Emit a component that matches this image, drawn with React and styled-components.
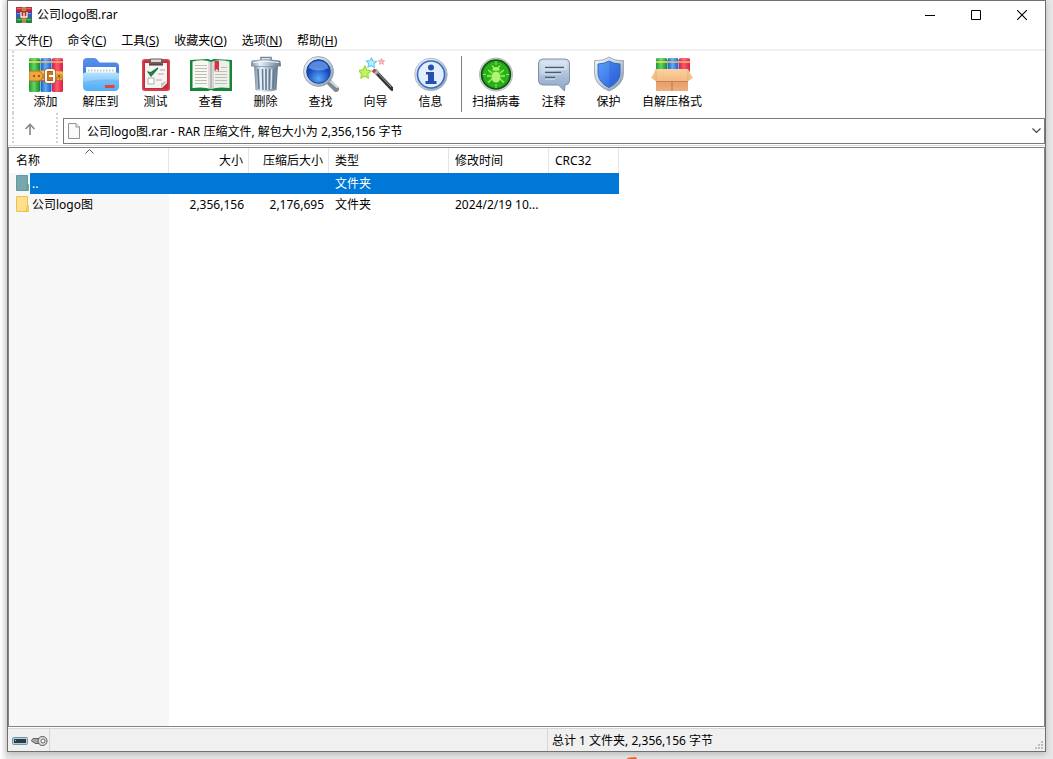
import React from 'react';
import styled, { createGlobalStyle } from 'styled-components';

const GlobalStyle = createGlobalStyle`
  * {
    box-sizing: border-box;
  }

  body {
    margin: 0;
    background: #e9e9e9;
    color: #000;
    font-family: 'Noto Sans', 'Noto Sans CJK SC', sans-serif;
    font-size: 12px;
    line-height: 18px;
  }

  button,
  select {
    margin: 0;
    padding: 0;
    border: none;
    background: none;
    color: inherit;
    font: inherit;
  }

  svg {
    display: block;
    flex: none;
  }
`;

const Desktop = styled.div`
  display: flex;
  flex-direction: column;
  height: 100vh;
  padding: 0 7px;
  overflow: hidden;
  background: linear-gradient(to right, #fff 0, #e6e6e6 7px, #e6e6e6 100%);
`;

const Window = styled.main`
  display: flex;
  flex: 1;
  flex-direction: column;
  min-height: 0;
  border: 1px solid #707070;
  background: #fff;
  box-shadow: 0 2px 6px rgba(0, 0, 0, 0.2);
`;

const DesktopEdge = styled.div`
  display: flex;
  justify-content: center;
  align-items: flex-end;
  height: 7px;
  padding-left: 210px;
`;

const TitleBar = styled.header`
  display: flex;
  align-items: center;
  height: 28px;
  padding-left: 8px;
`;

const Title = styled.h1`
  flex: 1;
  margin: 0;
  padding-left: 5px;
  font-size: 12px;
  font-weight: 400;
`;

const WindowButton = styled.button`
  display: flex;
  align-items: center;
  justify-content: center;
  width: 46px;
  height: 28px;
`;

const MenuBar = styled.nav`
  display: flex;
  gap: 15px;
  height: 22px;
  padding: 3px 7px 0;
  border-bottom: 2px solid #f0f0f0;
`;

const MenuItem = styled.button`
  height: 18px;
  white-space: nowrap;
`;

const Toolbar = styled.div`
  display: flex;
  height: 62px;
  padding: 0 4px;
`;

const Grip = styled.span`
  width: 2px;
  background: repeating-linear-gradient(
    to bottom,
    #d2d2d2 0,
    #d2d2d2 2px,
    #fff 2px,
    #fff 4px
  );
`;

const Tools = styled.div`
  display: flex;
  padding: 5px 4px 0;
`;

const ToolButton = styled.button`
  display: flex;
  flex-direction: column;
  gap: 1px;
  align-items: center;
  min-width: 55px;
  height: 55px;
  padding: 0 6px;
  white-space: nowrap;
`;

const Divider = styled.span`
  width: 1px;
  height: 56px;
  margin: 0 4px 0 3px;
  background: #808080;
`;

const AddressBar = styled.div`
  display: flex;
  height: 33px;
  padding-left: 4px;
  border-bottom: 1px solid #dcdcdc;
`;

const UpButton = styled.button`
  display: flex;
  align-items: center;
  justify-content: center;
  width: 42px;
  padding-right: 10px;
`;

const AddressBox = styled.div`
  display: flex;
  flex: 1;
  align-items: center;
  height: 26px;
  margin: 5px 0 0 5px;
  padding: 0 3px 0 4px;
  border: 1px solid #7a7a7a;
`;

const AddressSelect = styled.select`
  flex: 1;
  min-width: 0;
  height: 24px;
  padding: 2px 0 0 7px;
  appearance: none;
  outline: none;
`;

const FileList = styled.section`
  flex: 1;
  min-height: 0;
  margin-top: 1px;
  overflow: hidden;
  border: 1px solid #828282;
  background: linear-gradient(to right, #f7f7f7 160px, #fff 160px);
`;

const Table = styled.table`
  width: 610px;
  table-layout: fixed;
  border-collapse: separate;
  border-spacing: 0;
`;

const HeadCell = styled.th`
  height: 25px;
  padding: 0 5px 0 6px;
  border-right: 1px solid #e5e5e5;
  background: #fff;
  font-weight: 400;
  text-align: ${({ $align }) => $align || 'left'};
  white-space: nowrap;
`;

const SortHead = styled.div`
  position: relative;
  padding-left: 1px;

  svg {
    position: absolute;
    top: -3px;
    left: 70px;
  }
`;

const Row = styled.tr`
  background: ${({ $selected }) => ($selected ? '#0078d7' : 'transparent')};
  color: ${({ $selected }) => ($selected ? '#fff' : '#000')};
`;

const Cell = styled.td`
  height: 21px;
  padding: 0 5px 0 6px;
  overflow: hidden;
  text-align: ${({ $align }) => $align || 'left'};
  text-overflow: ellipsis;
  white-space: nowrap;
`;

const NameCell = styled(Cell)`
  padding: 0;
`;

const FileName = styled.div`
  display: flex;
  gap: 2px;
  align-items: center;
  height: 21px;
`;

const FileIconSlot = styled.span`
  width: 21px;
  height: 21px;
  padding: 2px 0 0 7px;
  background: #f7f7f7;
`;

const StatusBar = styled.footer`
  display: grid;
  grid-template-columns: 42px 498px 1fr auto;
  height: 23px;
  margin-top: 1px;
  border-top: 1px solid #d7d7d7;
  background: #f0f0f0;
`;

const StatusPart = styled.div`
  display: flex;
  align-items: center;
  gap: 3px;
  padding: 1px 0 0 4px;
  border-right: ${({ $last }) => ($last ? 'none' : '1px solid #d7d7d7')};
`;

const ResizeGrip = styled.span`
  align-self: end;
  padding: 0 2px 2px 0;
`;

/* icons */

const BooksShape = ({ height }) => (
  <>
    <rect x="0" y="0" width="11" height={height} rx="1.5" fill="url(#bookGreen)" />
    <rect x="11.5" y="0" width="11" height={height} rx="1.5" fill="url(#bookBlue)" />
    <rect x="23" y="0" width="11" height={height} rx="1.5" fill="url(#bookRed)" />
    <path d="M0 4h11" stroke="#e8e25c" strokeWidth="1.6" />
    <path d="M11.5 4h11M23 4h11" stroke="#f7c069" strokeWidth="1.6" />
    <path d="M1 1h9M12.5 1h9M24 1h9" stroke="#fff" strokeOpacity=".3" />
  </>
);

const Gradients = () => (
  <svg width="0" height="0" aria-hidden="true">
    <defs>
      <linearGradient id="bookGreen">
        <stop offset="0" stopColor="#1c9a35" />
        <stop offset=".45" stopColor="#62d562" />
        <stop offset="1" stopColor="#138a2b" />
      </linearGradient>
      <linearGradient id="bookBlue">
        <stop offset="0" stopColor="#1d57bd" />
        <stop offset=".45" stopColor="#5cabf5" />
        <stop offset="1" stopColor="#1f5ac4" />
      </linearGradient>
      <linearGradient id="bookRed">
        <stop offset="0" stopColor="#d0204a" />
        <stop offset=".45" stopColor="#fc5a70" />
        <stop offset="1" stopColor="#d91f40" />
      </linearGradient>
      <linearGradient id="belt" x2="0" y2="1">
        <stop offset="0" stopColor="#f7b64c" />
        <stop offset=".5" stopColor="#e59630" />
        <stop offset="1" stopColor="#b9661c" />
      </linearGradient>
      <linearGradient id="folderBack" x2="0" y2="1">
        <stop offset="0" stopColor="#5992ec" />
        <stop offset="1" stopColor="#2867d8" />
      </linearGradient>
      <linearGradient id="folderFront" x2="0" y2="1">
        <stop offset="0" stopColor="#b4e3fd" />
        <stop offset="1" stopColor="#5cb0f8" />
      </linearGradient>
      <linearGradient id="steel">
        <stop offset="0" stopColor="#758ba1" />
        <stop offset=".3" stopColor="#e9f1f7" />
        <stop offset=".6" stopColor="#aebfce" />
        <stop offset="1" stopColor="#60758b" />
      </linearGradient>
      <linearGradient id="silver" x2="1" y2="1">
        <stop offset="0" stopColor="#f4f7fa" />
        <stop offset=".5" stopColor="#c3ced9" />
        <stop offset="1" stopColor="#8194a9" />
      </linearGradient>
      <radialGradient id="lens" cy=".8">
        <stop offset="0" stopColor="#59aafa" />
        <stop offset="1" stopColor="#1549bd" />
      </radialGradient>
      <radialGradient id="virus">
        <stop offset="0" stopColor="#46cf20" />
        <stop offset="1" stopColor="#159c15" />
      </radialGradient>
      <linearGradient id="comment" x2="0" y2="1">
        <stop offset="0" stopColor="#d1dfed" />
        <stop offset="1" stopColor="#8ba5c3" />
      </linearGradient>
      <linearGradient id="shield" x2="1" y2="1">
        <stop offset="0" stopColor="#5aa0f7" />
        <stop offset="1" stopColor="#2a63e0" />
      </linearGradient>
      <linearGradient id="carton" x2="0" y2="1">
        <stop offset="0" stopColor="#d98c58" />
        <stop offset="1" stopColor="#efac7c" />
      </linearGradient>
      <linearGradient id="flap" x2="0" y2="1">
        <stop offset="0" stopColor="#fbd3a0" />
        <stop offset="1" stopColor="#f3b983" />
      </linearGradient>
    </defs>
  </svg>
);

const AppIcon = () => (
  <svg width="16" height="16" viewBox="0 0 16 16">
    <path fill="#c42c3c" d="M0 0h16v5H0z" />
    <path fill="#e5616d" d="M1 1h14v1.200H1z" />
    <path fill="#3558c4" d="M0 5h16v5.500H0z" />
    <path fill="#6a92e6" d="M1 6h14v1.200H1z" />
    <path fill="#238442" d="M0 10.500h16V16H0z" />
    <path fill="#4fba66" d="M1 12h14v1.200H1z" />
    <path fill="#3a2f48" d="M0 4.700h16v.6H0zM0 10.200h16v.6H0z" />
    <path fill="#b98a4c" d="M6 0h4v16H6z" />
    <path fill="#a2322f" d="M4 4h8v7H4z" />
    <path d="M5 5v5h6V5M8 5.500V10" fill="none" stroke="#fbf3ea" strokeWidth="1.300" />
  </svg>
);

const AddIcon = () => (
  <svg width="34" height="36" viewBox="0 -2 34 36">
    <BooksShape height={34} />
    <path d="M0 13.500q17-2 34 0v9q-17 1.500-34 0z" fill="url(#belt)" />
    <path d="M1 15q16-1.500 32 0M1 21q16 1 32 0" fill="none" stroke="#fcd68a" strokeWidth=".8" strokeDasharray="2 1" />
    <path d="M0 13h9q5 1 5 5t-5 5H0z" fill="#f0a63c" stroke="#b4651c" strokeWidth=".8" />
    <circle cx="5" cy="18" r="1" fill="#7a4212" />
    <circle cx="10" cy="18" r="1" fill="#7a4212" />
    <rect x="17" y="12" width="8" height="12" rx="1.500" fill="#c9781f" stroke="#8c5a2a" strokeWidth="3.400" />
    <rect x="17" y="12" width="8" height="12" rx="1.500" fill="none" stroke="#faf4ec" strokeWidth="2.200" />
    <path d="M20 18h6" stroke="#fff" strokeWidth="2" />
    <circle cx="30" cy="18" r="1" fill="#7a4212" />
  </svg>
);

const ExtractIcon = () => (
  <svg width="36" height="36" viewBox="0 0 36 36">
    <path d="M0 6q0-4 4-4h7q2 0 3.500 2l2 2.500H32q4 0 4 4V30H0z" fill="url(#folderBack)" />
    <path d="M3 11h30v12H3z" fill="#fff" />
    <path d="M5 14.500h26" stroke="#b8c8dd" strokeWidth="2" strokeDasharray="1.500 1.500" />
    <path d="M0 18q0-1.500 2-1.500h32q2 0 2 1.500v12q0 5-5 5H5q-5 0-5-5z" fill="url(#folderFront)" />
    <path d="M0 26q17-4 36-2v7q0 4-4 4H4q-4 0-4-4z" fill="#45a4f4" opacity=".35" />
    <path d="M22 29h9.500v3H22z" fill="#e6452e" />
  </svg>
);

const TestIcon = () => (
  <svg width="28" height="36" viewBox="0 0 28 36">
    <rect x="0" y="3" width="28" height="32" rx="3" fill="#c52b38" />
    <rect x=".8" y="4" width="26.400" height="30" rx="2" fill="none" stroke="#ea6470" strokeWidth=".8" />
    <path d="M3 7h22v20l-5 5H3z" fill="#f6f5f1" />
    <path d="M25 25l-6 7v-5z" fill="#c6c3c1" />
    <path d="M7 4.500q0-2 2-2h10q2 0 2 2V9H7z" fill="#72565a" />
    <path d="M9 3.500h10V6H9z" fill="#dfdada" />
    <path d="M7 9h14" stroke="#4d3035" />
    <path d="M6 16l3 4 7-8-7 4.500z" fill="#25935a" stroke="#167845" strokeWidth="1.200" />
    <path d="M18 14h5M16 18h6M14 24h6" stroke="#aaa" />
    <path d="M6 22h6v6H6z" fill="#fff" stroke="#999" strokeWidth=".8" />
  </svg>
);

const ViewIcon = () => (
  <svg width="42" height="36" viewBox="0 0 42 36">
    <path d="M0 4l18-1 3 1 3-1 18 1v31H24l-3-1-3 1H0z" fill="#15853b" />
    <path d="M2.500 5.500Q14 3 21 6v27q-7-2.500-18.500-1z" fill="#f8f8f3" />
    <path d="M39.500 5.500Q28 3 21 6v27q7-2.500 18.500-1z" fill="#efefea" />
    <path d="M18 5q2 0 3 1.500Q22 5 24 5v27q-2 0-3 1-1-1-3-1z" fill="#aaa" opacity=".35" />
    <path d="M5 9.500h12M5 12.500h12M5 15.500h12M5 18.500h12M5 21.500h12M5 24.500h12M5 27.500h12M31 11.500h6M25 15.500h12M25 18.500h12M25 21.500h12M25 24.500h12M25 27.500h12" stroke="#bdbdb8" />
    <path d="M21 6v27" stroke="#888" strokeWidth=".8" />
    <path d="M24.500 5H29v10.500L26.800 13l-2.300 2.500z" fill="#cf3545" />
  </svg>
);

const DeleteIcon = () => (
  <svg width="30" height="36" viewBox="0 0 30 36">
    <path d="M10 4V1.500h10V4" fill="none" stroke="#73869a" strokeWidth="1.600" />
    <path d="M3 10h24l-1.500 24q-10 3-21 0z" fill="url(#steel)" />
    <path d="M7 13l1 20M11.500 13l.5 21M15 13v21M18.500 13l-.5 21M23 13l-1 20" stroke="#667c93" strokeWidth="1.600" />
    <path d="M9 13l.7 20M13.200 13l.2 21M16.700 13v21M20.700 13l-.7 20" stroke="#e8f1f8" />
    <path d="M1 5q14-3 28 0l1 5q-15 1.500-30 0z" fill="url(#steel)" stroke="#74889b" strokeWidth=".7" />
    <path d="M2 6.500q13-2.500 26 0" fill="none" stroke="#f4f8fb" />
  </svg>
);

const FindIcon = () => (
  <svg width="36" height="36" viewBox="0 0 36 36">
    <path d="M25 25l8 8" stroke="#7d8893" strokeWidth="6" strokeLinecap="round" />
    <path d="M26 24l8 7" stroke="#d6dde4" strokeWidth="2" strokeLinecap="round" />
    <circle cx="15.500" cy="15.500" r="15" fill="url(#silver)" stroke="#8593a5" strokeWidth=".7" />
    <circle cx="15.500" cy="15.500" r="11.800" fill="url(#lens)" stroke="#183f96" />
    <path d="M5.500 12q2-7 10-7t10 7q-10 5-20 0z" fill="#9cc8ff" opacity=".5" />
  </svg>
);

const WizardIcon = () => (
  <svg width="34" height="36" viewBox="0 0 34 36">
    <path d="M16 15L33 33" stroke="#343434" strokeWidth="4" strokeLinecap="round" />
    <path d="M17 15l15 16" stroke="#a3a3a3" />
    <path d="M15.500 14l3 3.500" stroke="#b5aaaa" strokeWidth="4.500" />
    <path d="M14 14l2 2" stroke="#b74250" strokeWidth="3.500" />
    <path d="M6 10l1.800 4 4.200.8-3.200 3 .5 4.200-3.800-2L2 22l.5-4.500-3-3 4.500-.7z" fill="#c6f268" stroke="#9bdc38" strokeWidth="1.300" />
    <path d="M12.500 2l1.500 3 3.500.5-2.500 2.300.5 3.700-3-1.800L9 11l.8-3.500L7.500 5l3.300-.3z" fill="#b9ecfb" stroke="#6ccdf0" strokeWidth="1.200" />
    <path d="M22.500 2.500l.9 2 2.100.2-1.600 1.400.5 2.200-1.900-1.100-1.900 1.100.4-2.200L19.500 4.700l2.100-.2z" fill="#fbc4c4" stroke="#f2a0a0" />
  </svg>
);

const InfoIcon = () => (
  <svg width="34" height="36" viewBox="0 0 34 36">
    <circle cx="17" cy="18.500" r="16.300" fill="url(#silver)" stroke="#aab4bf" strokeWidth=".8" />
    <circle cx="17" cy="18.500" r="13.500" fill="#e4edfb" stroke="#356ccb" strokeWidth="1.600" />
    <circle cx="17" cy="11.500" r="3" fill="#244fae" />
    <path d="M12 16h8v9h2.500v3H11.500v-3H14v-6.500h-2z" fill="#244fae" />
  </svg>
);

const VirusIcon = () => (
  <svg width="34" height="36" viewBox="0 0 34 36">
    <circle cx="17" cy="18.500" r="16.500" fill="#dfe5df" stroke="#929c92" strokeWidth=".7" />
    <circle cx="17" cy="18.500" r="14.500" fill="url(#virus)" stroke="#174b1a" strokeWidth="1.600" />
    <path d="M17 5v4M17 28v4M4 18.500h3M27 18.500h3" stroke="#a5f271" />
    <circle cx="17" cy="18.500" r="11.500" fill="none" stroke="#4cc832" strokeWidth=".7" />
    <path d="M13 17L9 14M21 17l4-3M12 20H8M22 20h4M13 23l-4 3.500M21 23l4 3.500M15 12l-2-2.500M19 12l2-2.500" stroke="#a6ef66" strokeWidth="1.300" />
    <ellipse cx="17" cy="21" rx="4.500" ry="5.500" fill="#b4f274" />
    <path d="M13.500 14.500q0-3.500 3.500-3.500t3.500 3.500z" fill="#b4f274" />
  </svg>
);

const CommentIcon = () => (
  <svg width="32" height="36" viewBox="0 0 32 36">
    <path d="M5 3h22q4 0 4.500 4v18q-.5 4-4.500 4l-.5 6-6-6H5q-4 0-4.500-4V7Q1 3 5 3z" fill="url(#comment)" stroke="#7c91aa" />
    <path d="M5 5h22q2.500 0 2.500 3v6Q16 14 2.500 20V8q0-3 2.500-3z" fill="#fff" opacity=".25" />
    <path d="M7 11.500h19M7 16.500h16M7 21.500h10" stroke="#455d7b" strokeWidth="1.500" />
    <path d="M7 13h19M7 18h16M7 23h10" stroke="#edf4fa" strokeWidth=".8" />
  </svg>
);

const ProtectIcon = () => (
  <svg width="30" height="36" viewBox="0 0 30 36">
    <path d="M15 1q6 4 14.500 3.500V17q0 12-14.500 18Q.5 29 .5 17V4.500Q9 5 15 1z" fill="url(#silver)" stroke="#8b9db0" strokeWidth=".8" />
    <path d="M15 5q5 3 11 3v9q0 9-11 14.500Q4 26 4 17V8q6 0 11-3z" fill="url(#shield)" stroke="#2453b3" strokeWidth=".8" />
    <path d="M15 6q5 2.500 10 3v8q0 8-10 13z" fill="#173fbd" opacity=".2" />
  </svg>
);

const SfxIcon = () => (
  <svg width="42" height="36" viewBox="0 0 42 36">
    <g transform="translate(5 2)">
      <BooksShape height={14} />
    </g>
    <path d="M5 14h32v21H5z" fill="url(#carton)" />
    <path d="M5 13h32l5 9-5 3H5l-5-3z" fill="url(#flap)" />
    <path d="M5 13v12M37 13v12" stroke="#d9a06a" strokeWidth=".7" />
    <path d="M5 25.500h32" stroke="#b96d3c" strokeWidth=".8" opacity=".7" />
    <path d="M21 25v10" stroke="#b96d3c" strokeWidth=".8" />
  </svg>
);

const PageIcon = () => (
  <svg width="12" height="16" viewBox="0 0 12 16">
    <path d="M.5.5H8L11.500 4v11.500H.5z" fill="#fafafa" stroke="#929292" />
    <path d="M8 .5V4h3.500" fill="#eee" stroke="#929292" />
  </svg>
);

const FolderIcon = ({ selected }) => (
  <svg width="13" height="16" viewBox="0 0 13 16">
    <path d="M.5.5h11v15H.5z" fill={selected ? '#77a7ad' : '#ffe08a'} stroke={selected ? '#609aa5' : '#e9c352'} />
    <path d="M11 9.500h1.500v6H10z" fill={selected ? '#6aa18f' : '#f9d66a'} stroke={selected ? '#609a90' : '#dfb743'} strokeWidth=".7" />
  </svg>
);

const DriveIcon = () => (
  <svg width="16" height="10" viewBox="0 0 16 10">
    <rect x=".5" y="1.500" width="15" height="7" rx="1" fill="#b8ccd5" stroke="#7992a0" />
    <path d="M2 3h12v4H2z" fill="#263e4b" />
    <path d="M3 4h1v1H3z" fill="#9be1ec" />
  </svg>
);

const KeyIcon = () => (
  <svg width="17" height="12" viewBox="0 0 17 12">
    <path d="M8 3.500H2L.5 5.500l1 1.500h1.500l1 1.500h4" fill="#aaa" stroke="#606060" />
    <circle cx="11.500" cy="6" r="4.500" fill="#ddd" stroke="#555" />
    <circle cx="12" cy="6" r="2" fill="#fff" stroke="#666" />
  </svg>
);

const menus = [
  ['文件', 'F'],
  ['命令', 'C'],
  ['工具', 'S'],
  ['收藏夹', 'O'],
  ['选项', 'N'],
  ['帮助', 'H'],
];

const archiveTools = [
  { label: '添加', Icon: AddIcon },
  { label: '解压到', Icon: ExtractIcon },
  { label: '测试', Icon: TestIcon },
  { label: '查看', Icon: ViewIcon },
  { label: '删除', Icon: DeleteIcon },
  { label: '查找', Icon: FindIcon },
  { label: '向导', Icon: WizardIcon },
  { label: '信息', Icon: InfoIcon },
];

const extraTools = [
  { label: '扫描病毒', Icon: VirusIcon },
  { label: '注释', Icon: CommentIcon },
  { label: '保护', Icon: ProtectIcon },
  { label: '自解压格式', Icon: SfxIcon },
];

const files = [
  { name: '..', type: '文件夹', selected: true },
  {
    name: '公司logo图',
    size: '2,356,156',
    packed: '2,176,695',
    type: '文件夹',
    modified: '2024/2/19 10...',
  },
];

function ToolGroup({ tools }) {
  return tools.map(({ label, Icon }) => (
    <ToolButton key={label} type="button">
      <Icon />
      <span>{label}</span>
    </ToolButton>
  ));
}

function FileTable() {
  return (
    <FileList>
      <Table>
        <colgroup>
          <col width="160" />
          <col width="80" />
          <col width="80" />
          <col width="120" />
          <col width="100" />
          <col width="70" />
        </colgroup>
        <thead>
          <tr>
            <HeadCell aria-sort="ascending">
              <SortHead>
                名称
                <svg width="9" height="5" viewBox="0 0 9 5">
                  <path d="M.5 4.500l4-4 4 4" fill="none" stroke="#555" />
                </svg>
              </SortHead>
            </HeadCell>
            <HeadCell $align="right">大小</HeadCell>
            <HeadCell $align="right">压缩后大小</HeadCell>
            <HeadCell>类型</HeadCell>
            <HeadCell>修改时间</HeadCell>
            <HeadCell>CRC32</HeadCell>
          </tr>
        </thead>
        <tbody>
          {files.map((file) => (
            <Row key={file.name} $selected={file.selected}>
              <NameCell>
                <FileName>
                  <FileIconSlot>
                    <FolderIcon selected={file.selected} />
                  </FileIconSlot>
                  <span>{file.name}</span>
                </FileName>
              </NameCell>
              <Cell $align="right">{file.size}</Cell>
              <Cell $align="right">{file.packed}</Cell>
              <Cell>{file.type}</Cell>
              <Cell>{file.modified}</Cell>
              <Cell />
            </Row>
          ))}
        </tbody>
      </Table>
    </FileList>
  );
}

function App() {
  return (
    <Desktop>
      <GlobalStyle />
      <Window>
        <TitleBar>
          <AppIcon />
          <Title>公司logo图.rar</Title>
          <WindowButton type="button" aria-label="最小化">
            <svg width="10" height="10" viewBox="0 0 10 10">
              <path d="M0 5.500h10" stroke="#000" />
            </svg>
          </WindowButton>
          <WindowButton type="button" aria-label="最大化">
            <svg width="10" height="10" viewBox="0 0 10 10">
              <path d="M.5.5h9v9h-9z" fill="none" stroke="#000" />
            </svg>
          </WindowButton>
          <WindowButton type="button" aria-label="关闭">
            <svg width="10" height="10" viewBox="0 0 10 10">
              <path d="M0 0l10 10M10 0L0 10" stroke="#000" strokeWidth="1.100" />
            </svg>
          </WindowButton>
        </TitleBar>

        <MenuBar>
          {menus.map(([label, accessKey]) => (
            <MenuItem key={label} type="button">
              {label}(<u>{accessKey}</u>)
            </MenuItem>
          ))}
        </MenuBar>

        <Toolbar>
          <Grip />
          <Tools>
            <ToolGroup tools={archiveTools} />
            <Divider />
            <ToolGroup tools={extraTools} />
          </Tools>
        </Toolbar>

        <AddressBar>
          <Grip />
          <UpButton type="button" aria-label="上一级">
            <svg width="12" height="12" viewBox="0 0 12 12">
              <path d="M6 12V2M1.500 6L6 1.500 10.500 6" fill="none" stroke="#8a8a8a" strokeWidth="1.700" />
            </svg>
          </UpButton>
          <Grip />
          <AddressBox>
            <PageIcon />
            <AddressSelect aria-label="地址">
              <option>公司logo图.rar - RAR 压缩文件, 解包大小为 2,356,156 字节</option>
            </AddressSelect>
            <svg width="9" height="6" viewBox="0 0 9 6">
              <path d="M.5.5l4 4 4-4" fill="none" stroke="#444" strokeWidth="1.200" />
            </svg>
          </AddressBox>
        </AddressBar>

        <FileTable />

        <StatusBar>
          <StatusPart>
            <DriveIcon />
            <KeyIcon />
          </StatusPart>
          <StatusPart />
          <StatusPart $last>总计 1 文件夹, 2,356,156 字节</StatusPart>
          <ResizeGrip>
            <svg width="8" height="8" viewBox="0 0 8 8">
              <path d="M6 0h2v2H6zM3 3h2v2H3zM6 3h2v2H6zM0 6h2v2H0zM3 6h2v2H3zM6 6h2v2H6z" fill="#bdbdbd" />
            </svg>
          </ResizeGrip>
        </StatusBar>
      </Window>
      <DesktopEdge>
        <svg width="12" height="2" viewBox="0 0 12 2">
          <path d="M0 2l3-1.500L10 0l1 2z" fill="#e8663c" />
        </svg>
      </DesktopEdge>
      <Gradients />
    </Desktop>
  );
}

export default App;
